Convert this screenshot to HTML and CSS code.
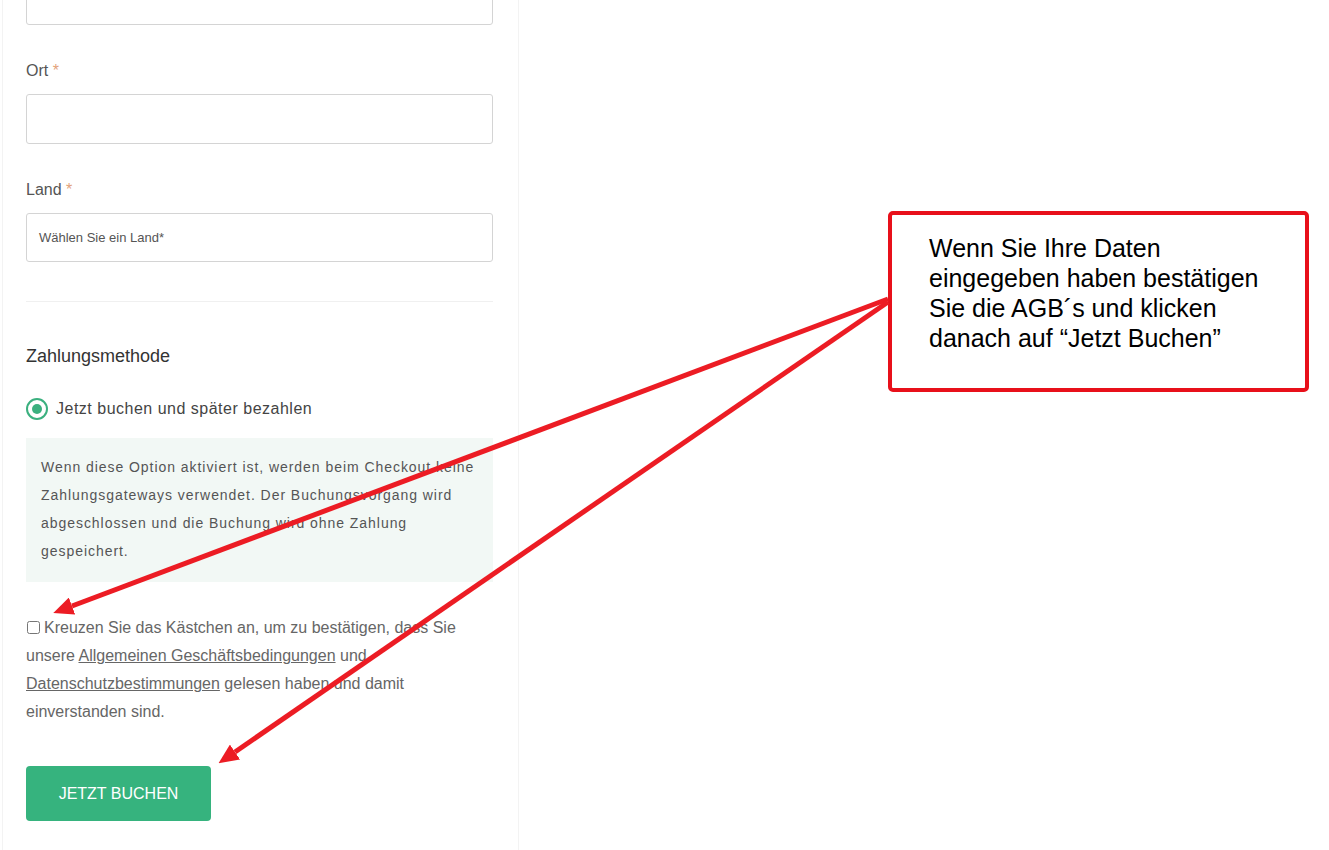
FILE: index.html
```html
<!DOCTYPE html>
<html lang="de">

<head>
    <meta charset="UTF-8">
    <meta name="viewport" content="width=device-width, initial-scale=1.0">
    <title>Buchung</title>
    <link rel="stylesheet" href="styles.css">
</head>

<body>

    <div class="booking-panel">
        <div class="field first-field">
            <input type="text" class="text-input">
        </div>

        <div class="field">
            <label class="field-label">Ort <span class="required">*</span></label>
            <input type="text" class="text-input">
        </div>

        <div class="field">
            <label class="field-label">Land <span class="required">*</span></label>
            <div class="select-input">Wählen Sie ein Land*</div>
        </div>

        <hr class="divider">

        <h3 class="section-title">Zahlungsmethode</h3>

        <div class="payment-option">
            <span class="radio"><span class="radio-dot"></span></span>
            <span class="payment-label">Jetzt buchen und später bezahlen</span>
        </div>

        <div class="payment-info">
            Wenn diese Option aktiviert ist, werden beim Checkout keine Zahlungsgateways verwendet. Der Buchungsvorgang wird abgeschlossen und die Buchung wird ohne Zahlung gespeichert.
        </div>

        <p class="terms">
            <input type="checkbox" class="terms-check">Kreuzen Sie das Kästchen an, um zu bestätigen, dass Sie unsere <a href="#">Allgemeinen Geschäftsbedingungen</a> und <a href="#">Datenschutzbestimmungen</a> gelesen haben und damit einverstanden sind.
        </p>

        <button class="book-btn">Jetzt buchen</button>
    </div>

    <div class="callout">
        Wenn Sie Ihre Daten<br>
        eingegeben haben bestätigen<br>
        Sie die AGB´s und klicken<br>
        danach auf “Jetzt Buchen”
    </div>

    <svg class="arrows" width="1329" height="850" viewBox="0 0 1329 850">
        <defs>
            <marker id="head" markerWidth="4" markerHeight="3.6" refX="0" refY="1.8" orient="auto" markerUnits="strokeWidth">
                <path d="M0,0 L4,1.8 L0,3.6 Z" fill="#ec1c24"></path>
            </marker>
        </defs>
        <line x1="888" y1="299" x2="72" y2="606" stroke="#ec1c24" stroke-width="5" marker-end="url(#head)"></line>
        <line x1="888" y1="302" x2="235" y2="752" stroke="#ec1c24" stroke-width="5" marker-end="url(#head)"></line>
    </svg>

</body>

</html>
```

FILE: styles.css
```css
* {
    margin: 0;
    padding: 0;
    box-sizing: border-box;
}

body {
    font-family: 'Liberation Sans', Arial, sans-serif;
    background-color: #fff;
    height: 850px;
    overflow: hidden;
    position: relative;
}

.booking-panel {
    width: 517px;
    margin-left: 2px;
    margin-top: -25px;
    padding: 0 25px 40px 23px;
    border-left: 1px solid #f3f3f3;
    border-right: 1px solid #f3f3f3;
    display: flex;
    flex-direction: column;
}

.field {
    margin-bottom: 34px;
    display: flex;
    flex-direction: column;
}

.field-label {
    font-size: 16px;
    line-height: 24px;
    color: #555;
    margin-bottom: 11px;
}

.required {
    color: #e3a27a;
}

.text-input,
.select-input {
    width: 100%;
    height: 50px;
    border: 1px solid #d4d4d4;
    border-radius: 3px;
    background-color: #fff;
    font-family: inherit;
}

.select-input {
    height: 49px;
    padding: 0 12px;
    display: flex;
    align-items: center;
    font-size: 13px;
    color: #555;
}

.divider {
    border: none;
    border-top: 1px solid #f0f0f0;
    margin: 5px 0 42px;
}

.section-title {
    font-size: 18px;
    font-weight: normal;
    line-height: 24px;
    color: #333;
    margin-bottom: 30px;
}

.payment-option {
    display: flex;
    align-items: center;
    gap: 8px;
    margin-bottom: 18px;
}

.radio {
    width: 22px;
    height: 22px;
    border: 2px solid #3bb07f;
    border-radius: 50%;
    display: flex;
    align-items: center;
    justify-content: center;
}

.radio-dot {
    width: 10px;
    height: 10px;
    border-radius: 50%;
    background-color: #3bb07f;
}

.payment-label {
    font-size: 16px;
    letter-spacing: 0.5px;
    color: #444;
}

.payment-info {
    background-color: #f2f8f5;
    padding: 15px 15px 17px;
    font-size: 14px;
    line-height: 28px;
    letter-spacing: 0.95px;
    color: #555;
    margin-bottom: 32px;
}

.terms {
    font-size: 16px;
    line-height: 28px;
    color: #666;
    margin-bottom: 40px;
}

.terms a {
    color: #666;
    text-decoration: underline;
}

.terms-check {
    width: 13px;
    height: 13px;
    margin: 0 4px 0 1px;
    vertical-align: -1px;
}

.book-btn {
    width: 185px;
    height: 55px;
    background-color: #36b37e;
    color: #fff;
    border: none;
    border-radius: 4px;
    font-family: inherit;
    font-size: 16px;
    text-transform: uppercase;
    cursor: pointer;
}

.callout {
    position: absolute;
    left: 888px;
    top: 211px;
    width: 421px;
    height: 181px;
    border: 4px solid #e8101a;
    border-radius: 5px;
    padding: 18px 0 0 37px;
    font-size: 25px;
    line-height: 30px;
    color: #000;
    background-color: #fff;
}

.arrows {
    position: absolute;
    left: 0;
    top: 0;
    pointer-events: none;
}
```
